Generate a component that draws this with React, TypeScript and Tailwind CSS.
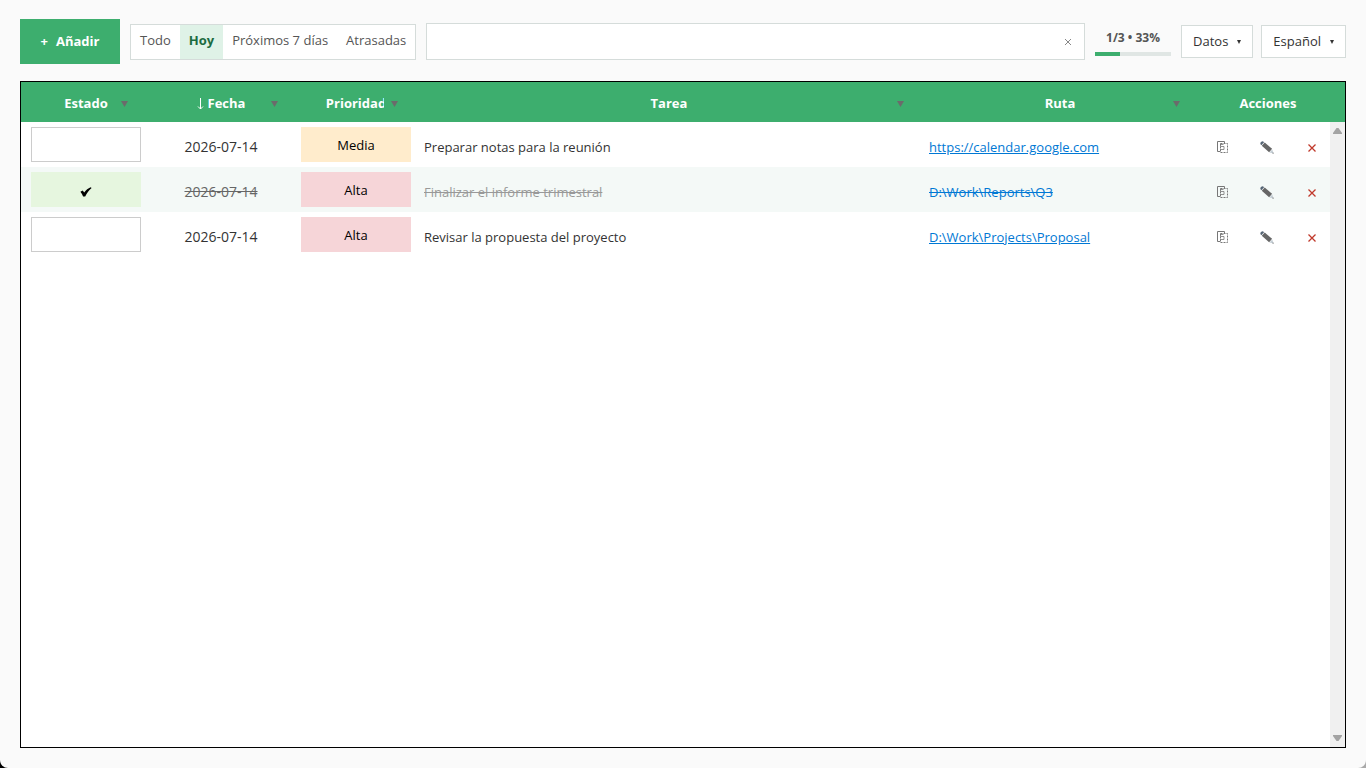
import React, { useState } from 'react'
import clsx from 'clsx'

type Priority = 'Media' | 'Alta'

interface Task {
  id: number
  done: boolean
  date: string
  priority: Priority
  title: string
  path: string
}

const initialTasks: Task[] = [
  {
    id: 1,
    done: false,
    date: '2026-07-14',
    priority: 'Media',
    title: 'Preparar notas para la reunión',
    path: 'https://calendar.google.com',
  },
  {
    id: 2,
    done: true,
    date: '2026-07-14',
    priority: 'Alta',
    title: 'Finalizar el informe trimestral',
    path: 'D:\\Work\\Reports\\Q3',
  },
  {
    id: 3,
    done: false,
    date: '2026-07-14',
    priority: 'Alta',
    title: 'Revisar la propuesta del proyecto',
    path: 'D:\\Work\\Projects\\Proposal',
  },
]

const filters = ['Todo', 'Hoy', 'Próximos 7 días', 'Atrasadas']

const headers = [
  { label: 'Estado', filter: true },
  { label: 'Fecha', filter: true, sorted: true },
  { label: 'Prioridad', filter: true },
  { label: 'Tarea', filter: true },
  { label: 'Ruta', filter: true },
  { label: 'Acciones', filter: false },
]

const priorityColors: Record<Priority, string> = {
  Media: 'bg-[#ffeccc]',
  Alta: 'bg-[#f6d5d8]',
}

const CopyIcon = () => (
  <svg width="11" height="12" viewBox="0 0 11 12" fill="none" stroke="#777">
    <path d="M3 10.500H.5V.5h7V2" />
    <path d="M3.500 2.500h7v9h-7z" strokeDasharray="2 1" />
    <path d="M6.500 3.500h-3v2h3.500v3h-4" strokeWidth="0.8" />
  </svg>
)

const PencilIcon = () => (
  <svg width="14" height="13" viewBox="0 0 14 13">
    <path d="M.3 2.900C.3 1.300 1.300.2 2.900.2l1.200 1.100-2.700 2.900z" fill="#566575" />
    <path d="M1.800 4.700 4.700 1.500l7.400 6.300-3 3.500z" fill="#666" />
    <path d="m9.500 11.500 2.700-3.100 1.300 4z" fill="#c3cdd4" />
    <path d="m12.200 12.200 1-1 .5 1.600z" fill="#666" />
  </svg>
)

const CheckIcon = () => (
  <svg width="12" height="10" viewBox="0 0 12 10">
    <path d="M.4 4.700 2.700 3.500l1.500 2C6 3 8.200 1.300 10.600.2l1 .9C9 3.300 6.900 6 5.200 9.500H3.100C2.500 7.700 1.600 6.200.4 4.700z" />
  </svg>
)

// Las dos tablas comparten anchos; solo cambia la última columna
const Columns = ({ last }: { last: string }) => (
  <colgroup>
    <col className="w-[125px]" />
    <col className="w-[150px]" />
    <col className="w-[120px]" />
    <col />
    <col className="w-[276px]" />
    <col className={last} />
  </colgroup>
)

interface MenuButtonProps {
  label: string
}

const MenuButton: React.FC<MenuButtonProps> = ({ label }) => (
  <button
    type="button"
    className="flex h-[33px] items-center gap-[9px] border border-[#d5dcda] bg-white px-[11px] text-[13px] text-[#333]"
  >
    {label}
    <svg width="4" height="4" viewBox="0 0 4 4" fill="#333">
      <path d="M0 0h4L2 4z" />
    </svg>
  </button>
)

const App = () => {
  const [tasks, setTasks] = useState(initialTasks)
  const [active, setActive] = useState('Hoy')
  const [query, setQuery] = useState('')

  const done = tasks.filter((task) => task.done).length
  const percent = Math.round((done / tasks.length) * 100)

  const visibleTasks = tasks.filter((task) =>
    task.title.toLowerCase().includes(query.toLowerCase()),
  )

  const toggle = (id: number) => {
    setTasks(
      tasks.map((task) =>
        task.id === id ? { ...task, done: !task.done } : task,
      ),
    )
  }

  return (
    <div className="bg-linear-to-r from-black to-[#aaa] font-['Open_Sans','Noto_Sans',sans-serif]">
      <div className="flex min-h-screen flex-col gap-[17px] rounded-b-lg bg-[#fafafa] px-5 pt-[19px] pb-5">
        <header className="flex items-center gap-2.5">
          <button
            type="button"
            className="flex h-[45px] w-[100px] items-center justify-center gap-2 bg-[#3dae6e] text-[13px] font-bold text-white"
          >
            <span>+</span>
            Añadir
          </button>

          <nav className="flex h-9 border border-[#d5dcda] bg-white">
            {filters.map((item) => (
              <button
                key={item}
                type="button"
                onClick={() => setActive(item)}
                className={clsx(
                  'px-[9px] pb-0.5 text-[13px]',
                  item === active
                    ? 'bg-[#dff2e7] font-bold text-[#1b6b40]'
                    : 'text-[#555]',
                )}
              >
                {item}
              </button>
            ))}
          </nav>

          <div className="flex h-[37px] min-w-0 flex-1 items-center border border-[#d5dcda] bg-white pr-3">
            <input
              type="text"
              aria-label="Buscar"
              value={query}
              onChange={(e) => setQuery(e.target.value)}
              className="h-full min-w-0 flex-1 px-3 text-[13px] outline-none"
            />
            <button
              type="button"
              aria-label="Borrar búsqueda"
              onClick={() => setQuery('')}
            >
              <svg width="8" height="8" viewBox="0 0 8 8" stroke="#888">
                <path d="m1 1 6 6M7 1 1 7" />
              </svg>
            </button>
          </div>

          <div className="flex w-[76px] flex-col gap-1">
            <span className="text-center text-[12px] leading-5 font-bold text-[#555]">
              {done}/{tasks.length} • {percent}%
            </span>
            <div className="h-1 bg-[#e0e6e4]">
              <div
                className="h-full bg-[#3dae6e]"
                style={{ width: `${percent}%` }}
              />
            </div>
          </div>

          <div className="flex gap-2">
            <MenuButton label="Datos" />
            <MenuButton label="Español" />
          </div>
        </header>

        <main className="flex flex-1 flex-col border border-black bg-white">
          <table className="w-full table-fixed bg-[#3dae6e] text-[13px] text-white">
            <Columns last="w-[147px]" />
            <thead>
              <tr className="h-10">
                {headers.map((item) => (
                  <th
                    key={item.label}
                    className="px-[5px] pt-[3px] pb-0 text-center first:pl-2.5 last:pr-3"
                  >
                    <div className="relative">
                      {item.sorted && (
                        <svg
                          className="mr-1 inline align-[-2px]"
                          width="7"
                          height="12"
                          viewBox="0 0 7 12"
                          fill="none"
                          stroke="white"
                        >
                          <path d="M3.500 0v11M1 8.500 3.500 11 6 8.500" />
                        </svg>
                      )}
                      {item.label}
                      {item.filter && (
                        <button
                          type="button"
                          aria-label={`Filtrar ${item.label}`}
                          className="absolute inset-y-0 right-[7px] flex w-5 items-center justify-center bg-[#3dae6e]"
                        >
                          <svg width="7" height="6" viewBox="0 0 7 6">
                            <path d="M0 0h7L3.500 6z" fill="#6b6b6b" />
                          </svg>
                        </button>
                      )}
                    </div>
                  </th>
                ))}
              </tr>
            </thead>
          </table>

          <div className="flex flex-1">
            <div className="min-w-0 flex-1">
              <table className="w-full table-fixed text-[13px] text-[#333]">
                <Columns last="w-[132px]" />
                <tbody>
                  {visibleTasks.map((task) => (
                    <tr key={task.id} className="h-[45px] even:bg-[#f4f9f7]">
                      <td className="py-0 pr-[5px] pl-2.5">
                        <button
                          type="button"
                          aria-label={`Estado de ${task.title}`}
                          onClick={() => toggle(task.id)}
                          className={clsx(
                            'flex h-[35px] w-full items-center justify-center',
                            task.done
                              ? 'bg-[#e6f6df] pt-1'
                              : 'border border-[#ccc] bg-white',
                          )}
                        >
                          {task.done && <CheckIcon />}
                        </button>
                      </td>
                      <td
                        className={clsx(
                          'pt-1 text-center text-[14px]',
                          task.done && 'text-[#666] line-through',
                        )}
                      >
                        {task.date}
                      </td>
                      <td className="px-[5px] py-0">
                        <button
                          type="button"
                          className={clsx(
                            'h-[35px] w-full pt-0.5 text-black',
                            priorityColors[task.priority],
                          )}
                        >
                          {task.priority}
                        </button>
                      </td>
                      <td
                        className={clsx(
                          'px-2 pt-1.5',
                          task.done && 'text-[#999] line-through',
                        )}
                      >
                        {task.title}
                      </td>
                      <td className="px-[7px] pt-1.5">
                        <a
                          href={task.path}
                          className={clsx(
                            'text-[#0078d4]',
                            task.done ? 'line-through' : 'underline',
                          )}
                        >
                          {task.path}
                        </a>
                      </td>
                      <td className="p-0">
                        <div className="-mr-1 flex pt-[5px] pl-0.5">
                          <button
                            type="button"
                            aria-label="Copiar"
                            className="flex flex-1 items-center justify-center"
                          >
                            <CopyIcon />
                          </button>
                          <button
                            type="button"
                            aria-label="Editar"
                            className="flex flex-1 items-center justify-center"
                          >
                            <PencilIcon />
                          </button>
                          <button
                            type="button"
                            aria-label="Eliminar"
                            className="flex flex-1 items-center justify-center pt-0.5"
                          >
                            <svg
                              width="8"
                              height="8"
                              viewBox="0 0 8 8"
                              stroke="#c0392b"
                              strokeWidth="1.3"
                            >
                              <path d="m.5.500 7 7M7.500.500l-7 7" />
                            </svg>
                          </button>
                        </div>
                      </td>
                    </tr>
                  ))}
                </tbody>
              </table>
            </div>
            <div className="flex w-[15px] flex-col items-center justify-between bg-[#f0f0f0] py-1.5">
              <svg width="9" height="6" viewBox="0 0 9 6" fill="#a3a3a3">
                <path d="M3.500 0h2L9 5v1H0V5z" />
              </svg>
              <svg width="9" height="6" viewBox="0 0 9 6" fill="#a3a3a3">
                <path d="M0 0h9v1L5.500 6h-2L0 1z" />
              </svg>
            </div>
          </div>
        </main>
      </div>
    </div>
  )
}

export default App
